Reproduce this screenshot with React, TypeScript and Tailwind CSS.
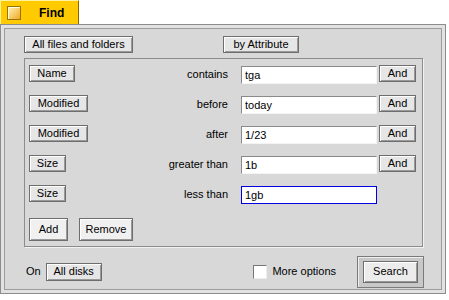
import React from 'react';

const font = { fontFamily: '"Liberation Sans", Arial, sans-serif' };

const Btn: React.FC<{ label: string; className?: string }> = ({ label, className = '' }) => (
  <button
    className={`flex items-center justify-center border border-[#6e6e6e] shadow-[inset_1px_1px_0_#ffffff,inset_-1px_-1px_0_#9a9a9a] text-[11px] text-black leading-none ${className}`}
  >
    {label}
  </button>
);

const Field: React.FC<{ value: string; focused?: boolean }> = ({ value, focused }) => (
  <div
    className={`w-[136px] h-[18px] bg-white flex items-center pl-[3px] text-[11px] leading-none text-black ${
      focused
        ? 'border border-[#0000e0]'
        : 'border border-t-[#8a8a8a] border-l-[#8a8a8a] border-r-[#f4f4f4] border-b-[#f4f4f4]'
    }`}
  >
    {value}
  </div>
);

type Row = { attr: string; w: string; op: string; value: string; and: boolean; focused?: boolean };

const rows: Row[] = [
  { attr: 'Name', w: 'w-[46px]', op: 'contains', value: 'tga', and: true },
  { attr: 'Modified', w: 'w-[59px]', op: 'before', value: 'today', and: true },
  { attr: 'Modified', w: 'w-[59px]', op: 'after', value: '1/23', and: true },
  { attr: 'Size', w: 'w-[37px]', op: 'greater than', value: '1b', and: true },
  { attr: 'Size', w: 'w-[37px]', op: 'less than', value: '1gb', and: false, focused: true },
];

export default function App() {
  return (
    <div className="w-[449px] h-[300px] bg-white relative" style={font}>
      {/* tab */}
      <div className="w-[79px] h-[24px] bg-[#ffcb00] border-t border-l border-[#fff2a0] border-r border-r-[#8a6a00] flex items-center pl-[6px]">
        <div className="w-[14px] h-[14px] border border-[#9a7400] bg-gradient-to-br from-[#fff4b0] to-[#f0a800] shadow-[inset_1px_1px_0_#fffbe0]" />
        <span className="ml-[18px] text-[12px] font-bold text-black">Find</span>
      </div>
      {/* window */}
      <div className="w-[446px] h-[270px] border border-[#8c8c8c] bg-[#e2e2e2] p-[3px]">
        <div className="w-full h-full border border-[#9c9c9c] bg-[#d8d8d8] flex flex-col">
          <div className="flex items-start pt-[7px] pl-[19px]">
            <Btn label="All files and folders" className="w-[109px] h-[17px] bg-[#e6e6e6]" />
            <Btn label="by Attribute" className="w-[76px] h-[17px] ml-[90px] bg-[#e6e6e6]" />
          </div>
          <div className="ml-[19px] mt-[5px] w-[399px] h-[189px] border border-[#8c8c8c] shadow-[1px_1px_0_#f2f2f2] pt-[6px] pl-[4px] flex flex-col">
            {rows.map((r, i) => (
              <div key={i} className="flex items-start h-[30px]">
                <Btn label={r.attr} className={`${r.w} h-[17px] bg-[#e6e6e6]`} />
                <div className="flex-1" />
                <div className="flex items-start">
                  <span className="w-[120px] text-right text-[11px] leading-[18px] text-black mr-[13px]">{r.op}</span>
                  <div className="mt-[1px]">
                    <Field value={r.value} focused={r.focused} />
                  </div>
                  {r.and ? (
                    <Btn label="And" className="w-[37px] h-[17px] ml-[2px] bg-[#e6e6e6]" />
                  ) : (
                    <div className="w-[37px] ml-[2px]" />
                  )}
                </div>
                <div className="w-[6px]" />
              </div>
            ))}
            <div className="flex items-start mt-[3px] gap-[11px]">
              <Btn label="Add" className="w-[39px] h-[23px] bg-[#f0f0f0]" />
              <Btn label="Remove" className="w-[54px] h-[23px] bg-[#f0f0f0]" />
            </div>
          </div>
          <div className="flex items-center h-[35px] mt-[7px] pl-[21px] pr-[17px]">
            <span className="text-[11px] text-black">On</span>
            <Btn label="All disks" className="w-[56px] h-[18px] ml-[5px] bg-[#e6e6e6]" />
            <div className="flex-1" />
            <div className="w-[14px] h-[14px] bg-white border border-t-[#777] border-l-[#777] border-r-[#eee] border-b-[#eee]" />
            <span className="ml-[5px] text-[11px] text-black">More options</span>
            <div className="ml-[21px] w-[67px] h-[32px] border border-[#7a7a7a] bg-[#c8c8c8] shadow-[inset_1px_1px_0_#eeeeee] flex items-center justify-center">
              <Btn label="Search" className="w-[55px] h-[22px] bg-[#ececec]" />
            </div>
          </div>
        </div>
      </div>
    </div>
  );
}
